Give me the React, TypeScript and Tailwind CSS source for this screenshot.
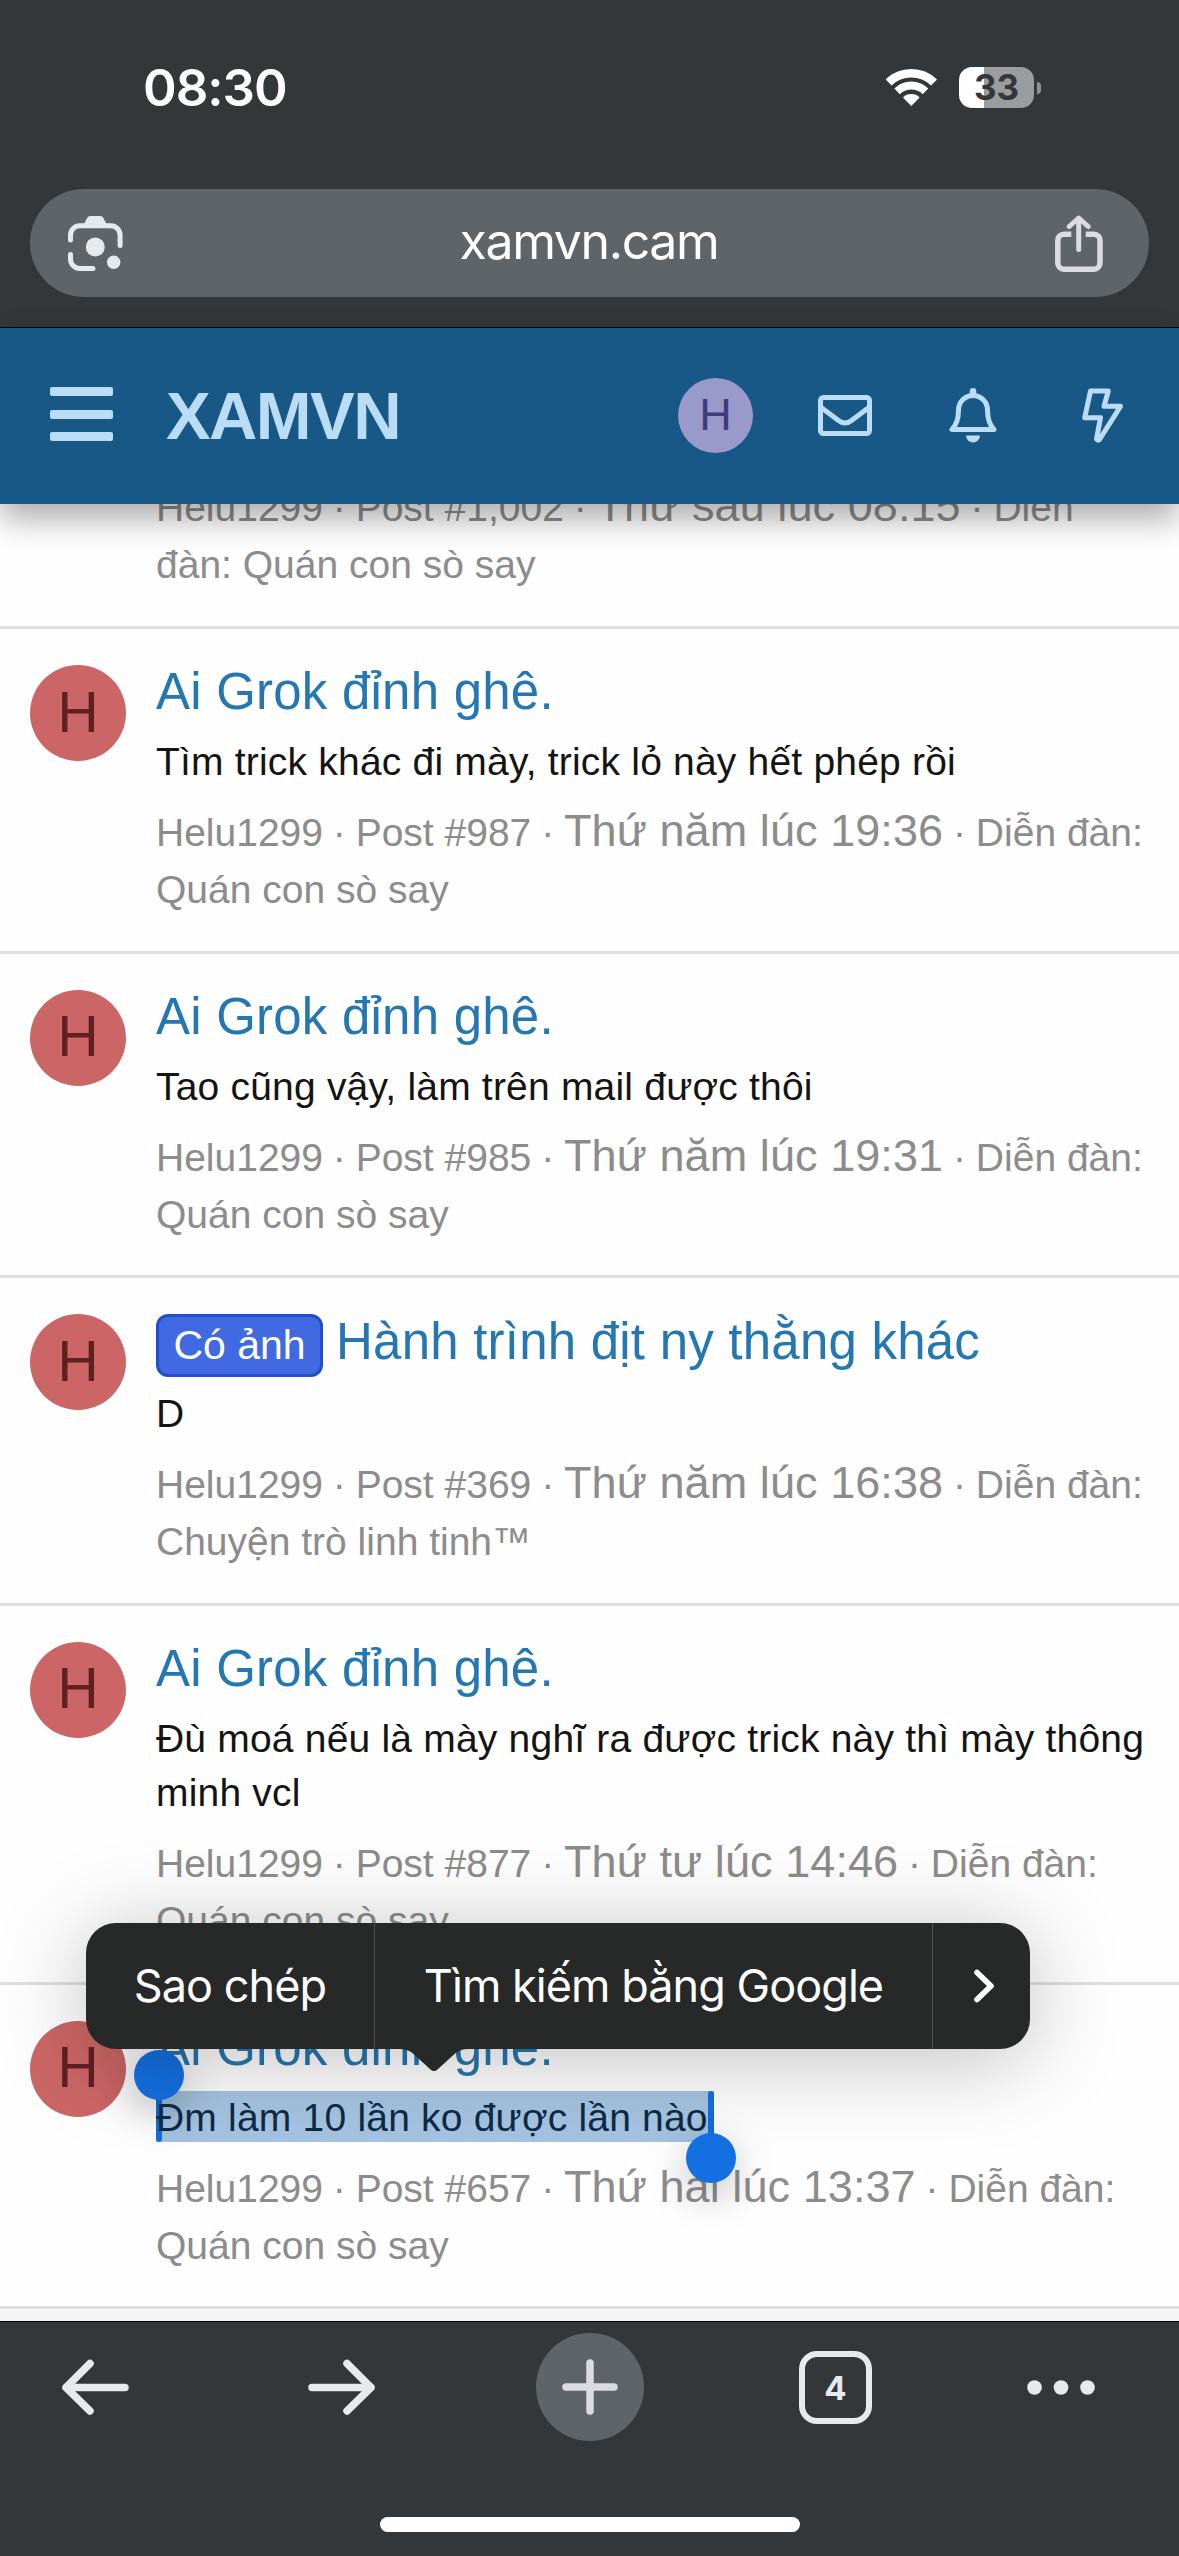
import type { ReactNode } from "react";
import clsx from "clsx";

interface Post {
  title: string;
  label?: string;
  snippet: string;
  post: string;
  time: string;
  forum: string;
  selected?: boolean;
}

const posts: Post[] = [
  { title: "Ai Grok đỉnh ghê.", snippet: "Tìm trick khác đi mày, trick lỏ này hết phép rồi", post: "#987", time: "Thứ năm lúc 19:36", forum: "Quán con sò say" },
  { title: "Ai Grok đỉnh ghê.", snippet: "Tao cũng vậy, làm trên mail được thôi", post: "#985", time: "Thứ năm lúc 19:31", forum: "Quán con sò say" },
  { title: "Hành trình địt ny thằng khác", label: "Có ảnh", snippet: "D", post: "#369", time: "Thứ năm lúc 16:38", forum: "Chuyện trò linh tinh™" },
  { title: "Ai Grok đỉnh ghê.", snippet: "Đù moá nếu là mày nghĩ ra được trick này thì mày thông minh vcl", post: "#877", time: "Thứ tư lúc 14:46", forum: "Quán con sò say" },
  { title: "Ai Grok đỉnh ghê.", snippet: "Đm làm 10 lần ko được lần nào", post: "#657", time: "Thứ hai lúc 13:37", forum: "Quán con sò say", selected: true },
];

function StatusBar() {
  return (
    <div className="flex h-[175px] items-start justify-between pl-[143px] pr-[138px] pt-[67px] text-white">
      <span className="text-[51px] font-semibold leading-[41px] tracking-[-1px]">08:30</span>
      <div className="flex items-center">
        <svg width="51" height="41" viewBox="0 -2 51 41" fill="none" stroke="white">
          <path d="M2.6 13.5A32.7 32.7 0 0 1 48 13.5" strokeWidth="8.5" />
          <path d="M11.1 22.3A20.5 20.5 0 0 1 39.5 22.3" strokeWidth="8" />
          <path d="M25.3 37L17 28.4A12 12 0 0 1 33.6 28.4Z" fill="white" stroke="none" />
        </svg>
        <div className="ml-[22px] flex h-[41px] w-[75px] items-center justify-center overflow-hidden rounded-[13px] bg-[linear-gradient(to_right,#fff_25px,#9b9c9e_25px)]">
          <span className="text-[35px] font-bold leading-none text-[#33373a]">33</span>
        </div>
        <div className="ml-[3px] h-3 w-1 rounded-r-full bg-[#8f9193]" />
      </div>
    </div>
  );
}

function AddressBar() {
  return (
    <div className="mx-[30px] mt-[14px] flex h-[108px] shrink-0 items-center justify-between rounded-full bg-[#5f6468] pl-[38px] pr-[46px]">
      <svg width="55" height="55" viewBox="0 0 55 55" fill="none" stroke="#e7eaed" strokeWidth="5" strokeLinecap="round">
        <path d="M2.5 24V19A9.3 9.3 0 0 1 11.8 9.7H42.8A9.3 9.3 0 0 1 52.1 19V29.5" />
        <path d="M2.5 38.5V43A9.5 9.5 0 0 0 12 52.5H25" />
        <path d="M15.5 9L19 2.2Q20 0 22.5 0H32Q34.5 0 35.5 2.2L39 9Z" fill="#e7eaed" stroke="none" />
        <circle cx="27.3" cy="31" r="9.5" fill="#e7eaed" stroke="none" />
        <circle cx="45.7" cy="46.3" r="6.7" fill="#e7eaed" stroke="none" />
      </svg>
      <span className="pb-[4px] text-[50px] leading-none tracking-[-1.4px] text-white">xamvn.cam</span>
      <svg width="48" height="57" viewBox="0 0 48 57" fill="none" stroke="#dadce1" strokeWidth="5.5">
        <path d="M16.3 19.2H9A6.2 6.2 0 0 0 2.8 25.4V48A6.2 6.2 0 0 0 9 54.2H38.8A6.2 6.2 0 0 0 45 48V25.4A6.2 6.2 0 0 0 38.8 19.2H30.7" />
        <path d="M14.2 11.5L23.7 3L33.2 11.5M23.7 4V34.5" strokeWidth="5" strokeLinecap="round" strokeLinejoin="round" />
      </svg>
    </div>
  );
}

function SiteHeader() {
  return (
    <header className="relative z-10 mt-[30px] flex h-[177px] shrink-0 items-center border-t border-black bg-[#185886] pb-[2px] pl-[50px] font-['Liberation_Sans',sans-serif] text-[#badcf4] shadow-[0_15px_30px_rgba(0,0,0,0.32)]">
      <div className="flex w-[63px] flex-col gap-[13.5px] pb-[2px]">
        <div className="h-[9px] rounded-[2px] bg-[#badcf4]" />
        <div className="h-[9px] rounded-[2px] bg-[#badcf4]" />
        <div className="h-[9px] rounded-[2px] bg-[#badcf4]" />
      </div>
      <span className="ml-[53px] w-[512px] text-[67px] font-bold leading-none tracking-[-1.6px]">XAMVN</span>
      <div className="flex size-[75px] items-center justify-center rounded-full bg-[#9999cc] pb-[2px] text-[45px] leading-none text-[#3d3d7a]">H</div>
      <svg className="ml-[65px]" width="54" height="41" viewBox="0 0 54 41" fill="none" stroke="currentColor" strokeWidth="5">
        <rect x="2.5" y="2.5" width="49" height="36" rx="3" />
        <path d="M2.5 12L20.5 25.5Q27 30.5 33.5 25.5L51.5 12" />
      </svg>
      <svg className="ml-[77px]" width="48" height="55" viewBox="0 0 48 55" fill="none" stroke="currentColor" strokeWidth="5" strokeLinejoin="round" strokeLinecap="round">
        <path d="M3 41.5H45C40 36.5 38.5 31 38.5 22A14.5 14.5 0 0 0 9.5 22C9.5 31 8 36.5 3 41.5Z" />
        <path d="M24 3.3V7" strokeWidth="6.5" />
        <path d="M17 47.5H31A7 7 0 0 1 17 47.5Z" fill="currentColor" stroke="none" />
      </svg>
      <svg className="ml-[85px]" width="41" height="55" viewBox="0 0 41 55" fill="none" stroke="currentColor" strokeWidth="5" strokeLinejoin="round">
        <path d="M8.5 3H26.3L22 18.3H38.5L17.5 51.5Q16 53 14.5 51L18.5 29.7H2.7Z" />
      </svg>
    </header>
  );
}

function Dot() {
  return <span className="-mx-px">·</span>;
}

function Meta({ post, time, rest }: { post: string; time: string; rest: ReactNode }) {
  return (
    <p className="text-[39px] leading-[57px] text-[#8c8c8c]">
      Helu1299 <Dot /> Post {post} <Dot /> <span className="text-[45px] leading-none tracking-[0.08px]">{time}</span> <Dot /> {rest}
    </p>
  );
}

function PostRow({ item }: { item: Post }) {
  return (
    <li className="flex gap-[30px] border-b-[3px] border-[#dfdfdf] px-[30px] pb-[32.67px] pt-[36px]">
      <div className="flex size-24 shrink-0 items-center justify-center rounded-full bg-[#cc6666] pb-[2px] text-[57px] leading-none text-[#602020]">H</div>
      <div className="w-[1010px] shrink-0">
        <h3 className={clsx("flex items-baseline text-[51px] leading-[53px] tracking-[0.22px] text-[#2577b1]", item.label && "h-[56px]")}>
          {item.label && (
            <span className="mr-[13px] flex h-[63px] w-[167px] shrink-0 items-center justify-center rounded-xl border-[3px] border-[#204ecf] bg-[#4169e1] text-[41px] leading-[57px] tracking-normal text-white">
              {item.label}
            </span>
          )}
          {item.title}
        </h3>
        <p className="relative mt-[17px] text-[39px] leading-[54px] tracking-[0.2px] text-[#141414]">
          {item.selected && (
            <>
              <span className="absolute left-0 top-0 h-[51px] w-[558px] bg-[#a5c3e1]" />
              <span className="absolute left-0 top-0 h-[51px] w-[6px] rounded-b-full bg-[#146fe1]" />
              <span className="absolute left-[-22px] top-[-41px] size-[50px] rounded-full bg-[#146fe1] shadow-[0_12px_40px_rgba(0,0,0,0.25)]" />
              <span className="absolute left-[552px] top-0 h-[51px] w-[6px] rounded-t-full bg-[#146fe1]" />
              <span className="absolute left-[530px] top-[42px] z-[1] size-[50px] rounded-full bg-[#146fe1] shadow-[0_12px_40px_rgba(0,0,0,0.25)]" />
            </>
          )}
          <span className={clsx("relative", item.selected && "text-[#0c2b47]")}>{item.snippet}</span>
        </p>
        <div className="mt-[15px]">
          <Meta post={item.post} time={item.time} rest={<>Diễn đàn:<br />{item.forum}</>} />
        </div>
      </div>
    </li>
  );
}

// Text selection callout
function SelectionMenu() {
  return (
    <div className="absolute left-[86px] top-[1923px] z-20 flex h-[126px] w-[944px] rounded-[30px] bg-[#272828] text-[45px] leading-none tracking-[-0.95px] text-white shadow-[0_10px_90px_rgba(0,0,0,0.25)]">
      <div className="flex w-[288px] items-center justify-center pb-[2px]">Sao chép</div>
      <div className="flex w-[559px] items-center justify-center border-x border-[#505151] pb-[2px]">Tìm kiếm bằng Google</div>
      <div className="flex flex-1 items-center justify-center pl-[4px]">
        <svg width="22" height="34" viewBox="0 0 22 34" fill="none" stroke="white" strokeWidth="5.6" strokeLinecap="round" strokeLinejoin="round">
          <path d="M4 3.5L18 17L4 30.5" />
        </svg>
      </div>
      <svg className="absolute left-[314px] top-[125px]" width="68" height="24" viewBox="0 0 68 24" fill="#272828">
        <path d="M0 0H68V1Q60 1 54.5 6L37.5 21.5Q34 24.5 30.5 21.5L13.5 6Q8 1 0 1Z" />
      </svg>
    </div>
  );
}

function BottomBar() {
  return (
    <nav className="relative z-10 flex h-[235px] shrink-0 flex-col items-center border-t border-black bg-[#33373a]">
      <div className="mt-[11px] flex h-[108px] w-full items-center pl-[61px]">
        <svg width="68" height="56" viewBox="0 0 68 56" fill="none" stroke="#e7eaed" strokeWidth="7.5" strokeLinecap="round" strokeLinejoin="round">
          <path d="M64 28.500H5M29 4.500L5 28.500L29 52" />
        </svg>
        <svg className="ml-[179px]" width="68" height="56" viewBox="0 0 68 56" fill="none" stroke="#e7eaed" strokeWidth="7.5" strokeLinecap="round" strokeLinejoin="round">
          <path d="M4 28.500H63M39 4.500L63 28.500L39 52" />
        </svg>
        <div className="ml-[160px] flex size-[108px] items-center justify-center rounded-full bg-[#5f6468]">
          <svg width="56" height="56" viewBox="0 0 56 56" fill="none" stroke="#dadce1" strokeWidth="7.5" strokeLinecap="round">
            <path d="M4 28H52M28 4V52" />
          </svg>
        </div>
        <div className="ml-[155px] flex size-[73px] items-center justify-center rounded-[18px] border-[6.5px] border-[#e7eaed] pt-[2px] text-[33px] font-bold leading-none text-[#e7eaed]">4</div>
        <svg className="ml-[155px]" width="68" height="16" viewBox="0 0 68 16" fill="#e7eaed">
          <circle cx="7.5" cy="8.5" r="7.3" />
          <circle cx="34" cy="8.5" r="7.3" />
          <circle cx="60.5" cy="8.5" r="7.3" />
        </svg>
      </div>
      <div className="mt-[76px] h-[15px] w-[420px] rounded-full bg-white" />
    </nav>
  );
}

export default function App() {
  return (
    <div className="relative flex h-[2556px] w-[1179px] flex-col overflow-hidden bg-[#33373a] font-['Inter',sans-serif]">
      <StatusBar />
      <AddressBar />
      <SiteHeader />
      <main className="min-h-0 flex-1 overflow-hidden bg-[#f5f5f5] font-['Liberation_Sans',sans-serif]">
        <ul className="-mt-[25px] bg-[#fefefe]">
          <li className="border-b-[3px] border-[#dfdfdf] pb-[33px] pl-[156px]">
            <Meta post="#1,002" time="Thứ sáu lúc 08:15" rest={<>Diễn<br />đàn: Quán con sò say</>} />
          </li>
          {posts.map((item) => (
            <PostRow key={item.post} item={item} />
          ))}
        </ul>
      </main>
      <SelectionMenu />
      <BottomBar />
    </div>
  );
}
